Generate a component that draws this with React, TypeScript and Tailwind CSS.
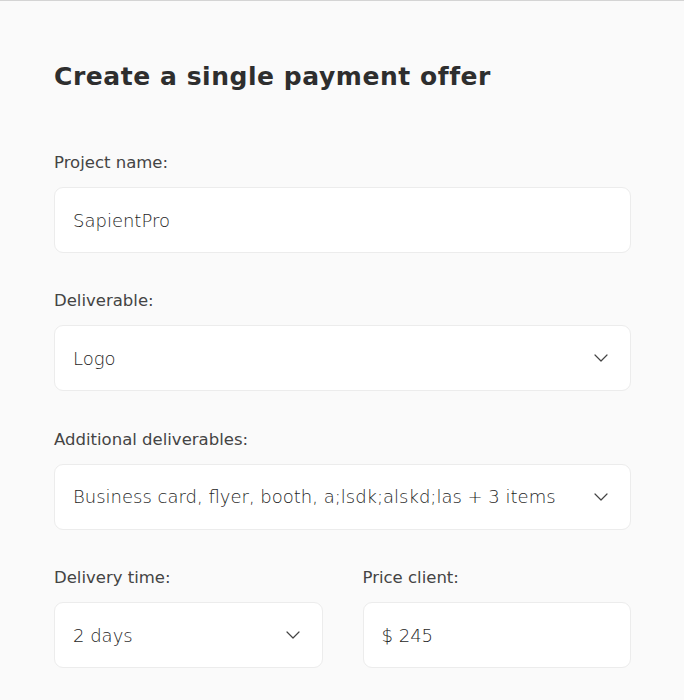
import { ReactNode } from "react";

function Chevron() {
  return (
    <svg width="14" height="8" viewBox="0 0 14 8" fill="none" className="shrink-0">
      <path d="M1 1l6 6 6-6" stroke="#444" strokeWidth="1.2" strokeLinecap="round" strokeLinejoin="round" />
    </svg>
  );
}

function Field({ label, children }: { label: string; children: ReactNode }) {
  return (
    <div className="flex flex-col">
      <label className="text-[16.5px] leading-[22px] text-[#444]">{label}</label>
      <div className="mt-[13px]">{children}</div>
    </div>
  );
}

function Box({ value, select }: { value: string; select?: boolean }) {
  return (
    <div className="flex h-[66px] items-center justify-between rounded-[9px] border border-[#ececec] bg-white pl-[18px] pr-[22px]">
      <span className="text-[18px] font-light text-[#1e1e1e]">{value}</span>
      {select ? <Chevron /> : null}
    </div>
  );
}

export default function App() {
  return (
    <div
      className="min-h-[700px] border-t border-[#d4d4d4] bg-[#fafafa] pl-[54px] pr-[53px] pt-[60px]"
      style={{ fontFamily: '"DejaVu Sans", "Liberation Sans", sans-serif' }}
    >
      <h1 className="text-[25px] font-bold leading-[32px] tracking-[0.55px] text-[#2e2e2e]">
        Create a single payment offer
      </h1>
      <div className="mt-[59px] flex flex-col gap-[37.4px]">
        <Field label="Project name:">
          <Box value="SapientPro" />
        </Field>
        <Field label="Deliverable:">
          <Box value="Logo" select />
        </Field>
        <Field label="Additional deliverables:">
          <Box value="Business card, flyer, booth, a;lsdk;alskd;las + 3 items" select />
        </Field>
        <div className="grid grid-cols-2 gap-[40px]">
          <Field label="Delivery time:">
            <Box value="2 days" select />
          </Field>
          <Field label="Price client:">
            <Box value="$ 245" />
          </Field>
        </div>
      </div>
    </div>
  );
}
